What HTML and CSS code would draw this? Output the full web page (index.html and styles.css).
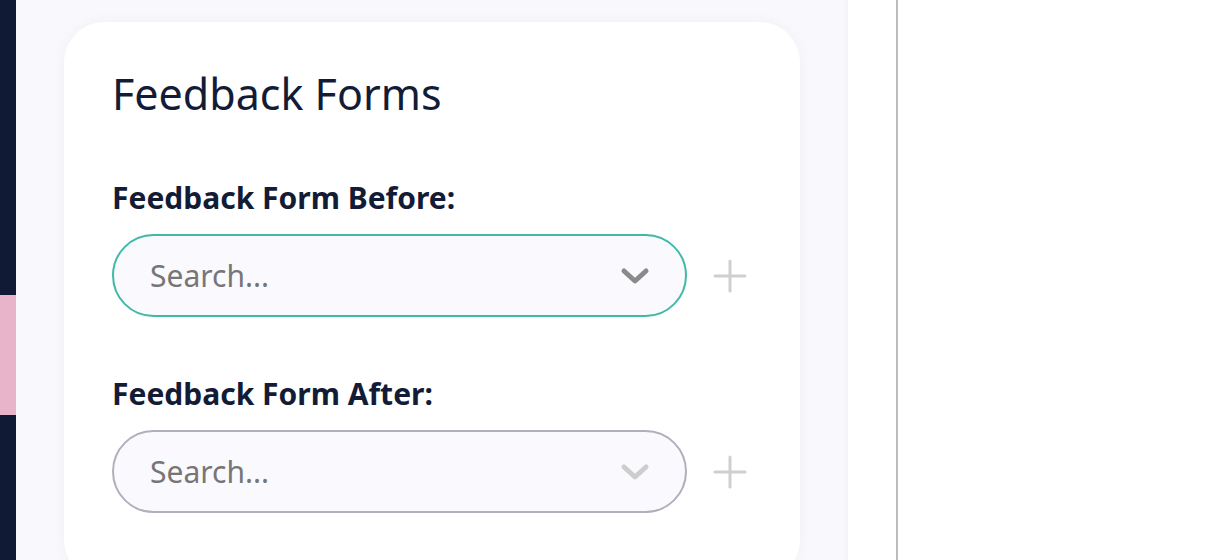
FILE: index.html
```html
<!DOCTYPE html>
<html>
<head>
<meta charset="utf-8">
<link rel="stylesheet" href="styles.css">
</head>
<body>
<aside class="sidebar">
  <div class="sb-dark sb-top"></div>
  <div class="sb-pink"></div>
  <div class="sb-dark sb-bottom"></div>
</aside>
<main class="main">
  <section class="card">
    <h1 class="title">Feedback Forms</h1>
    <div class="field">
      <label class="label">Feedback Form Before:</label>
      <div class="row">
        <div class="select active">
          <span class="placeholder">Search...</span>
          <svg class="chev" width="30" height="18" viewBox="0 0 30 18"><path d="M4 4 L15 14 L26 4" fill="none" stroke="currentColor" stroke-width="5" stroke-linecap="round" stroke-linejoin="round"/></svg>
        </div>
        <button class="add" type="button" aria-label="Add">
          <svg width="36" height="36" viewBox="0 0 36 36"><path d="M18 3 V33 M3 18 H33" stroke="currentColor" stroke-width="3" stroke-linecap="round"/></svg>
        </button>
      </div>
    </div>
    <div class="field">
      <label class="label">Feedback Form After:</label>
      <div class="row">
        <div class="select">
          <span class="placeholder">Search...</span>
          <svg class="chev light" width="30" height="18" viewBox="0 0 30 18"><path d="M4 4 L15 14 L26 4" fill="none" stroke="currentColor" stroke-width="5" stroke-linecap="round" stroke-linejoin="round"/></svg>
        </div>
        <button class="add" type="button" aria-label="Add">
          <svg width="36" height="36" viewBox="0 0 36 36"><path d="M18 3 V33 M3 18 H33" stroke="currentColor" stroke-width="3" stroke-linecap="round"/></svg>
        </button>
      </div>
    </div>
  </section>
</main>
<div class="right">
  <div class="divider"></div>
</div>
</body>
</html>
```
FILE: styles.css
```css
html, body {
  margin: 0;
  padding: 0;
  height: 560px;
  overflow: hidden;
}
body {
  display: flex;
  font-family: "Noto Sans", "Open Sans", sans-serif;
  background: #fff;
}
.sidebar {
  width: 16px;
  flex: none;
  display: flex;
  flex-direction: column;
}
.sb-dark { background: #111a35; }
.sb-top { height: 295px; }
.sb-pink { height: 120px; background: #e8b4ca; }
.sb-bottom { flex: 1; }
.main {
  width: 832px;
  height: 560px;
  overflow: hidden;
  flex: none;
  background: #f9f9fd;
  padding: 22px 48px 0;
  box-sizing: border-box;
  box-shadow: inset -6px 0 6px -4px rgba(0,0,0,0.03);
}
.card {
  background: #fff;
  border-radius: 40px;
  padding: 48px 48px 60px;
  box-shadow: 0 0 14px rgba(20, 20, 60, 0.04);
  height: 558px;
  box-sizing: border-box;
}
.title {
  margin: 0 0 62px;
  font-size: 43px;
  line-height: 48px;
  font-weight: 400;
  color: #131c36;
}
.field {
  margin-bottom: 59px;
}
.label {
  display: block;
  font-size: 30px;
  line-height: 36px;
  font-weight: 700;
  color: #131c36;
  margin-bottom: 18px;
}
.row {
  display: flex;
  align-items: center;
}
.select {
  width: 575px;
  height: 83px;
  flex: none;
  box-sizing: border-box;
  border: 2px solid #b1afbb;
  border-radius: 42px;
  background: #f9f9fe;
  display: flex;
  align-items: center;
  justify-content: space-between;
  padding: 0 35px 0 36px;
}
.select.active {
  border-color: #41b9a6;
}
.placeholder {
  font-size: 30px;
  color: #767676;
}
.chev { color: #8a8a8a; }
.chev.light { color: #cdcdcd; }
.add {
  margin-left: 25px;
  border: none;
  background: none;
  padding: 0;
  color: #cfcfcf;
  display: flex;
}
.right {
  flex: 1;
  display: flex;
}
.divider {
  margin-left: 48px;
  width: 2px;
  background: #bdbdbd;
}
```
